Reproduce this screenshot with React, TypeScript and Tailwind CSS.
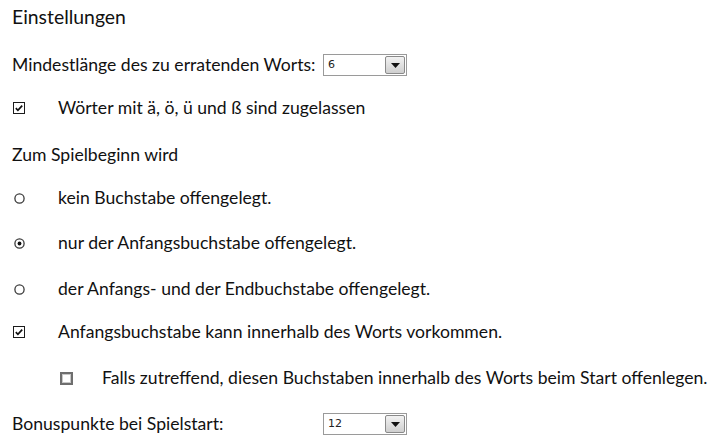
import React from 'react';

const font = { fontFamily: 'Lato, "Open Sans", sans-serif' };

const CheckBox: React.FC<{ checked?: boolean; flat?: boolean }> = ({ checked, flat }) =>
    flat ? (
        <svg width="13" height="13" viewBox="0 0 13 13" className="shrink-0">
            <rect x="1" y="1" width="11" height="11" fill="#fff" stroke="#6e6e6e" strokeWidth="2" />
            <rect x="2.5" y="2.5" width="8" height="8" fill="none" stroke="#c8c8c8" strokeWidth="1" />
        </svg>
    ) : (
        <svg width="12" height="12" viewBox="0 0 12 12" className="shrink-0">
            <rect x="0.5" y="0.5" width="11" height="11" fill="#fff" stroke="#1c1c1c" strokeWidth="1" />
            <path d="M2.8 6.2 L4.9 8.3 L9.2 3.6" fill="none" stroke="#111" strokeWidth="1.7" />
        </svg>
    );

const Radio: React.FC<{ checked?: boolean }> = ({ checked }) => (
    <svg width="11" height="11" viewBox="0 0 11 11" className="shrink-0">
        <circle cx="5.5" cy="5.5" r="4.6" fill="#fff" stroke="#3a3a3a" strokeWidth="1.3" />
        {checked && <circle cx="5.5" cy="5.5" r="1.9" fill="#111" />}
    </svg>
);

const Select: React.FC<{ value: string }> = ({ value }) => (
    <div className="flex h-[22px] w-[84px] items-center justify-between border border-[#9a9a9a] bg-white pl-[4px] pr-[1px]">
        <span className="text-[11px] text-[#222]" style={{ fontFamily: 'Tahoma, "DejaVu Sans", sans-serif' }}>{value}</span>
        <div className="flex h-[18px] w-[20px] items-center justify-center rounded-[2px] border border-[#8a8a8a] bg-gradient-to-b from-[#f2f2f2] to-[#cfcfcf]">
            <svg width="9" height="5" viewBox="0 0 9 5">
                <path d="M0 0 H9 L4.5 5 Z" fill="#111" />
            </svg>
        </div>
    </div>
);

const Row: React.FC<{ mt: string; children: React.ReactNode }> = ({ mt, children }) => (
    <div className={`flex h-[24px] items-center ${mt}`}>{children}</div>
);

export default function App() {
    return (
        <div className="h-[444px] w-[720px] overflow-hidden bg-white pl-[12px] pt-[5px] text-[17.6px] text-[#111]" style={font}>
            <Row mt="mt-0">
                <span className="text-[19.4px]">Einstellungen</span>
            </Row>
            <Row mt="mt-[24px]">
                <span className="w-[311px] shrink-0">Mindestlänge des zu erratenden Worts:</span>
                <Select value="6" />
            </Row>
            <Row mt="mt-[19px]">
                <span className="w-[46px] pl-[1px]"><CheckBox checked /></span>
                <span>Wörter mit ä, ö, ü und ß sind zugelassen</span>
            </Row>
            <Row mt="mt-[23px]">
                <span>Zum Spielbeginn wird</span>
            </Row>
            <Row mt="mt-[19px]">
                <span className="w-[46px] pl-[2px]"><Radio /></span>
                <span>kein Buchstabe offengelegt.</span>
            </Row>
            <Row mt="mt-[21px]">
                <span className="w-[46px] pl-[2px]"><Radio checked /></span>
                <span>nur der Anfangsbuchstabe offengelegt.</span>
            </Row>
            <Row mt="mt-[22px]">
                <span className="w-[46px] pl-[2px]"><Radio /></span>
                <span>der Anfangs- und der Endbuchstabe offengelegt.</span>
            </Row>
            <Row mt="mt-[19px]">
                <span className="w-[46px] pl-[1px]"><CheckBox checked /></span>
                <span>Anfangsbuchstabe kann innerhalb des Worts vorkommen.</span>
            </Row>
            <Row mt="mt-[22px]">
                <span className="w-[90px] pl-[48px]"><CheckBox flat /></span>
                <span>Falls zutreffend, diesen Buchstaben innerhalb des Worts beim Start offenlegen.</span>
            </Row>
            <Row mt="mt-[22px]">
                <span className="w-[311px] shrink-0">Bonuspunkte bei Spielstart:</span>
                <Select value="12" />
            </Row>
        </div>
    );
}
